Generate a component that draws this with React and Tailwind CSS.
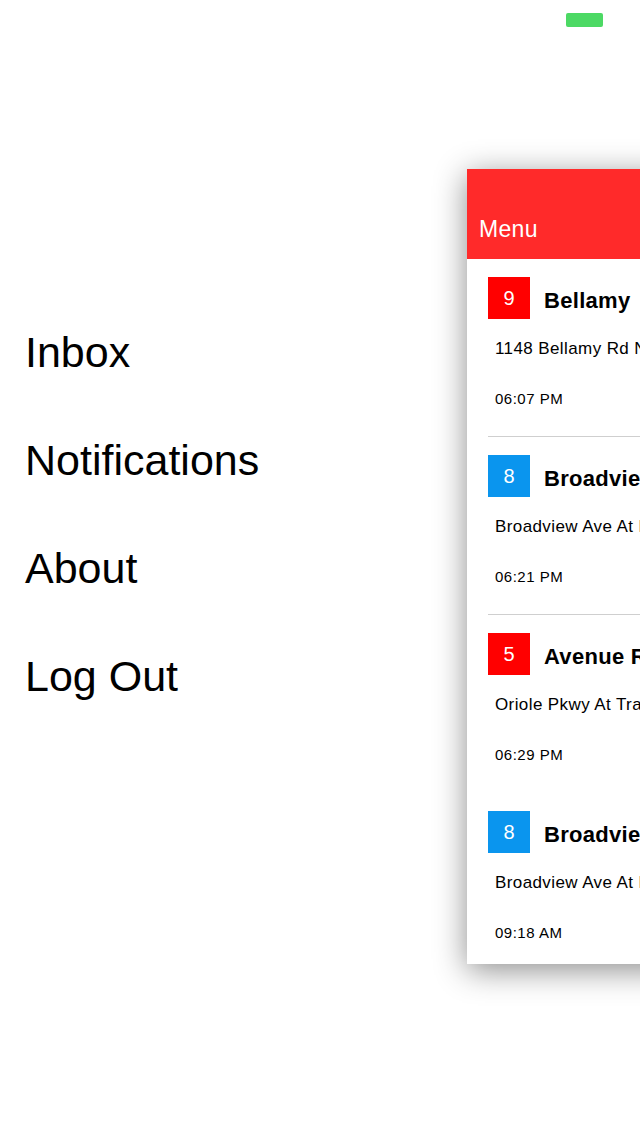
import React from 'react';

const menuLinks = ['Inbox', 'Notifications', 'About', 'Log Out'];

const stops = [
  { route: '9', color: 'bg-[#ff0000]', title: 'Bellamy', address: '1148 Bellamy Rd N', time: '06:07 PM', divider: true },
  { route: '8', color: 'bg-[#0a95ee]', title: 'Broadview', address: 'Broadview Ave At Danforth', time: '06:21 PM', divider: true },
  { route: '5', color: 'bg-[#ff0000]', title: 'Avenue Rd', address: 'Oriole Pkwy At Trans', time: '06:29 PM', divider: false },
  { route: '8', color: 'bg-[#0a95ee]', title: 'Broadview', address: 'Broadview Ave At Danforth', time: '09:18 AM', divider: false },
];

const StopRow = ({ stop }) => (
  <div className="shrink-0">
    <div className="pt-[18px] pl-[21px] whitespace-nowrap">
      <div className="flex items-center">
        <div className={`w-[42px] h-[42px] shrink-0 flex items-center justify-center text-white text-[20px] leading-[20px] ${stop.color}`}>
          {stop.route}
        </div>
        <span className="ml-[14px] pt-[6px] text-[22px] leading-[22px] tracking-[0.3px] font-bold text-black">{stop.title}</span>
      </div>
      <p className="mt-[21px] pl-[7px] text-[17px] leading-[17px] tracking-[0.4px] text-black">{stop.address}</p>
      <p className="mt-[34px] pl-[7px] text-[15px] leading-[15px] tracking-[0.5px] text-black">{stop.time}</p>
    </div>
    <div className="pt-[30px] pl-[21px]">
      <div className={`h-px ${stop.divider ? 'bg-[#cfcfcf]' : 'bg-transparent'}`}></div>
    </div>
  </div>
);

const App = () => {
  return (
    <div
      className="w-[640px] h-[1136px] overflow-hidden bg-white"
      style={{ fontFamily: '"Liberation Sans", Arial, sans-serif' }}
    >
      {/* status bar */}
      <div className="h-[40px] flex justify-end pt-[13px] pr-[37px]">
        <div className="w-[37px] h-[14px] rounded-[2px] bg-[#4cd964]"></div>
      </div>

      <div className="flex items-start mt-[129px]">
        {/* side menu */}
        <nav className="w-[467px] shrink-0 pt-[162px] pl-[25px] flex flex-col gap-[65px]">
          {menuLinks.map((label) => (
            <span key={label} className="text-[43px] leading-[43px] text-black whitespace-nowrap">
              {label}
            </span>
          ))}
        </nav>

        {/* main panel slid aside */}
        <div className="w-[640px] h-[795px] shrink-0 bg-white overflow-hidden flex flex-col shadow-[0_6px_30px_rgba(0,0,0,0.45)]">
          <header className="h-[90px] shrink-0 bg-[#ff2a2a] flex items-end pl-[12px] pb-[18px]">
            <span className="text-white text-[23px] leading-[23px] tracking-[0.3px]">Menu</span>
          </header>
          <div className="flex flex-col">
            {stops.map((stop, i) => (
              <StopRow key={i} stop={stop} />
            ))}
          </div>
        </div>
      </div>
    </div>
  );
};

export default App;
